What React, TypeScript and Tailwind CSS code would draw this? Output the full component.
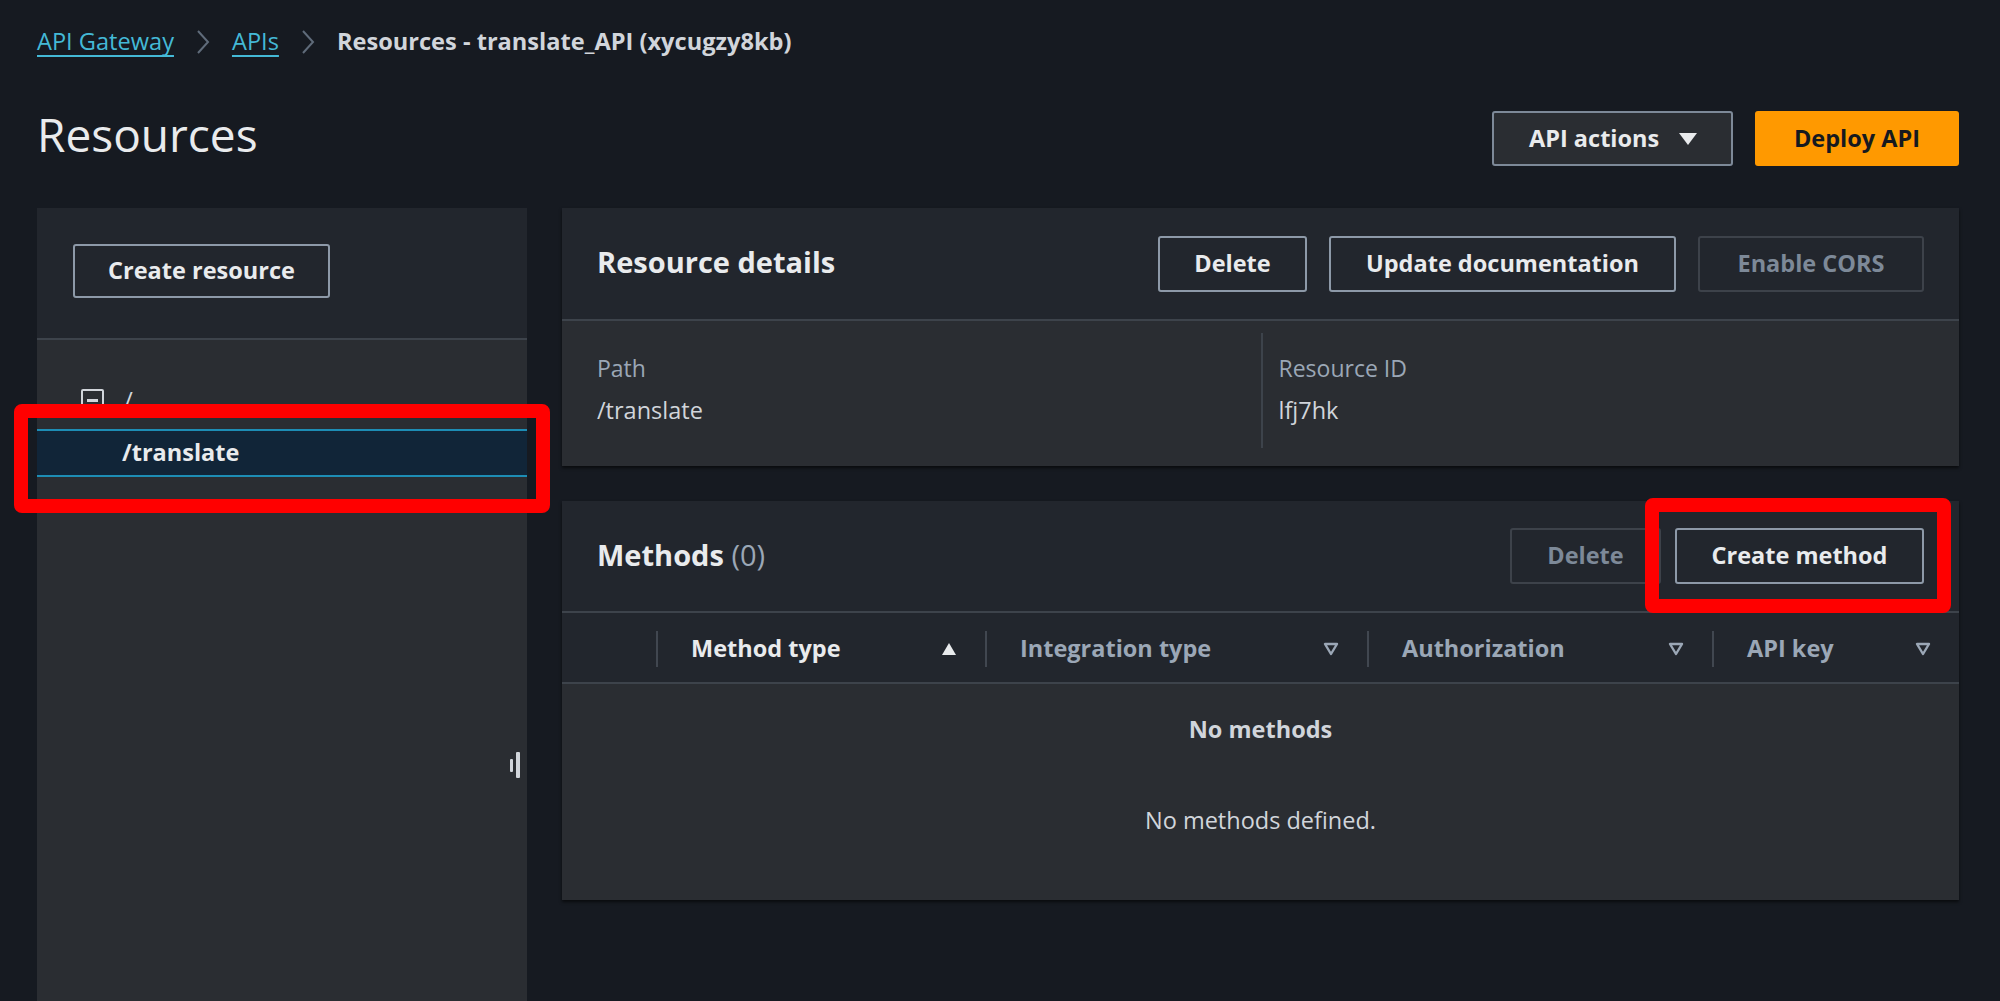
import React from 'react'

const font = { fontFamily: '"Open Sans", "Noto Sans", sans-serif' }

function Chevron() {
  return (
    <svg width="14" height="26" viewBox="0 0 14 26" className="mx-[22px]">
      <polyline points="2,2 12,13 2,24" fill="none" stroke="#5f6b7a" strokeWidth="2" />
    </svg>
  )
}

function Btn({ children, disabled = false, className = '' }: { children: React.ReactNode; disabled?: boolean; className?: string }) {
  return (
    <button
      className={
        'h-[56px] rounded-[3px] border-2 text-[23.5px] font-bold whitespace-nowrap flex items-center justify-center bg-transparent ' +
        (disabled ? 'border-[#3d424a] text-[#7d8998] ' : 'border-[#8d99a8] text-[#e9ebed] ') +
        className
      }
    >
      {children}
    </button>
  )
}

function SortDown() {
  return (
    <svg width="16" height="14" viewBox="0 0 16 14">
      <polygon points="2,2 14,2 8,12" fill="none" stroke="#9ba7b6" strokeWidth="2.4" strokeLinejoin="round" />
    </svg>
  )
}

function SortUp() {
  return (
    <svg width="16" height="14" viewBox="0 0 16 14">
      <polygon points="8,1 15,13 1,13" fill="#e9ebed" />
    </svg>
  )
}

function HeaderCell({ label, active = false, width }: { label: string; active?: boolean; width: string }) {
  return (
    <div className={'flex items-center h-full ' + width}>
      <div className="w-[2px] h-[36px] bg-[#414750]" />
      <div className="flex-1 flex items-center justify-between pl-[33px] pr-[28px]">
        <span className={'text-[23.5px] font-bold ' + (active ? 'text-[#e9ebed]' : 'text-[#9ba7b6]')}>{label}</span>
        {active ? <SortUp /> : <SortDown />}
      </div>
    </div>
  )
}

export default function App() {
  return (
    <div className="relative w-[2000px] h-[1001px] overflow-hidden bg-[#161a21] text-[#d1d5db] flex flex-col pl-[37px] pr-[41px]" style={font}>
      {/* breadcrumb */}
      <div className="mt-[25px] h-[34px] flex items-center text-[23.6px]">
        <span className="text-[#44b9d6] underline underline-offset-[5px] decoration-[2px]">API Gateway</span>
        <Chevron />
        <span className="text-[#44b9d6] underline underline-offset-[5px] decoration-[2px]">APIs</span>
        <Chevron />
        <span className="font-bold text-[#d1d5db]">Resources - translate_API (xycugzy8kb)</span>
      </div>

      {/* page header */}
      <div className="mt-[52px] h-[55px] flex items-center justify-between">
        <h1 className="text-[46px] text-[#e9ebed] -mt-[9px]">Resources</h1>
        <div className="flex items-center gap-[22px]">
          <button className="h-[55px] w-[241px] pl-[35px] pr-[33px] rounded-[3px] border-2 border-[#7d8998] bg-[#2a2d32] text-[#e9ebed] text-[23.5px] font-bold flex items-center justify-between">
            API actions
            <svg width="20" height="16" viewBox="0 0 20 16">
              <polygon points="1,2 19,2 10,14" fill="#e9ebed" />
            </svg>
          </button>
          <button className="h-[55px] w-[204px] rounded-[3px] bg-[#ff9900] text-[#16191f] text-[23.5px] font-bold">Deploy API</button>
        </div>
      </div>

      {/* main */}
      <div className="mt-[42px] flex-1 min-h-0 flex gap-[35px] items-start">
        {/* left nav */}
        <div className="relative w-[490px] h-full flex flex-col bg-[#2a2d32] shrink-0">
          <div className="bg-[#22262d] pt-[36px] pb-[40px] pl-[36px] border-b-2 border-[#3d434b]">
            <button className="h-[54px] w-[257px] rounded-[3px] border-2 border-[#8d99a8] text-[#e9ebed] text-[23.5px] font-bold">Create resource</button>
          </div>
          <div className="pt-[40px]">
            <div className="h-[40px] flex items-center pl-[44px] gap-[20px]">
              <div className="w-[23px] h-[23px] border-2 border-[#d1d5db] rounded-[2px] flex items-center justify-center">
                <div className="w-[11px] h-[3px] bg-[#d1d5db]" />
              </div>
              <span className="text-[24px] text-[#d1d5db]">/</span>
            </div>
            <div className="mt-[9px] h-[48px] border-y-2 border-[#1d8db5] bg-[#112538] flex items-center pl-[85px]">
              <span className="text-[23.5px] font-bold text-[#e9ebed]">/translate</span>
            </div>
          </div>
          {/* resize handle */}
          <div className="absolute right-[7px] top-[544px] flex items-center gap-[3px]">
            <div className="w-[3px] h-[13px] bg-[#d1d5db] rounded-[1px]" />
            <div className="w-[4px] h-[26px] bg-[#d1d5db] rounded-[1px]" />
          </div>
        </div>

        {/* right column */}
        <div className="flex-1 flex flex-col gap-[35px]">
          {/* resource details */}
          <div className="bg-[#2a2d32] shadow-[0_2px_3px_rgba(0,0,0,0.6)]">
            <div className="h-[113px] bg-[#22262d] flex items-center justify-between px-[35px] border-b-2 border-[#3d434b]">
              <h2 className="text-[29px] font-bold text-[#e9ebed] -mt-[3px]">Resource details</h2>
              <div className="flex items-center gap-[22px]">
                <Btn className="w-[149px]">Delete</Btn>
                <Btn className="w-[347px]">Update documentation</Btn>
                <Btn disabled className="w-[226px]">Enable CORS</Btn>
              </div>
            </div>
            <div className="px-[35px] pt-[12px] pb-[18px] grid grid-cols-2">
              <div className="h-[115px] pt-[19px]">
                <div className="text-[23px] leading-[32px] text-[#9ba7b6]">Path</div>
                <div className="mt-[10px] text-[23.5px] leading-[32px] text-[#d1d5db]">/translate</div>
              </div>
              <div className="h-[115px] pt-[19px] pl-[16px] border-l-2 border-[#3d434b]">
                <div className="text-[23px] leading-[32px] text-[#9ba7b6]">Resource ID</div>
                <div className="mt-[10px] text-[23.5px] leading-[32px] text-[#d1d5db]">lfj7hk</div>
              </div>
            </div>
          </div>

          {/* methods */}
          <div className="bg-[#2a2d32] shadow-[0_2px_3px_rgba(0,0,0,0.6)]">
            <div className="h-[112px] bg-[#22262d] flex items-center justify-between px-[35px] border-b-2 border-[#3d434b]">
              <h2 className="text-[29px] font-bold text-[#e9ebed] -mt-[2px]">
                Methods <span className="font-normal text-[#9ba7b6]">(0)</span>
              </h2>
              <div className="flex items-center gap-[14px]">
                <Btn disabled className="w-[151px]">Delete</Btn>
                <Btn className="w-[249px]">Create method</Btn>
              </div>
            </div>
            <div className="h-[71px] pt-[3px] bg-[#22262d] flex items-center border-b-2 border-[#3d434b]">
              <div className="w-[94px]" />
              <HeaderCell label="Method type" active width="w-[329px]" />
              <HeaderCell label="Integration type" width="w-[382px]" />
              <HeaderCell label="Authorization" width="w-[345px]" />
              <HeaderCell label="API key" width="flex-1" />
            </div>
            <div className="h-[216px] flex flex-col items-center pt-[29px]">
              <div className="text-[23.5px] leading-[32px] font-bold text-[#d1d5db]">No methods</div>
              <div className="mt-[59px] text-[23.5px] leading-[32px] text-[#d1d5db]">No methods defined.</div>
            </div>
          </div>
        </div>
      </div>

      {/* annotation boxes */}
      <div className="absolute left-[14px] top-[404px] w-[536px] h-[109px] border-[14px] border-[#ff0000] rounded-[8px]" />
      <div className="absolute left-[1645px] top-[498px] w-[306px] h-[115px] border-[14px] border-[#ff0000] rounded-[8px]" />
    </div>
  )
}
